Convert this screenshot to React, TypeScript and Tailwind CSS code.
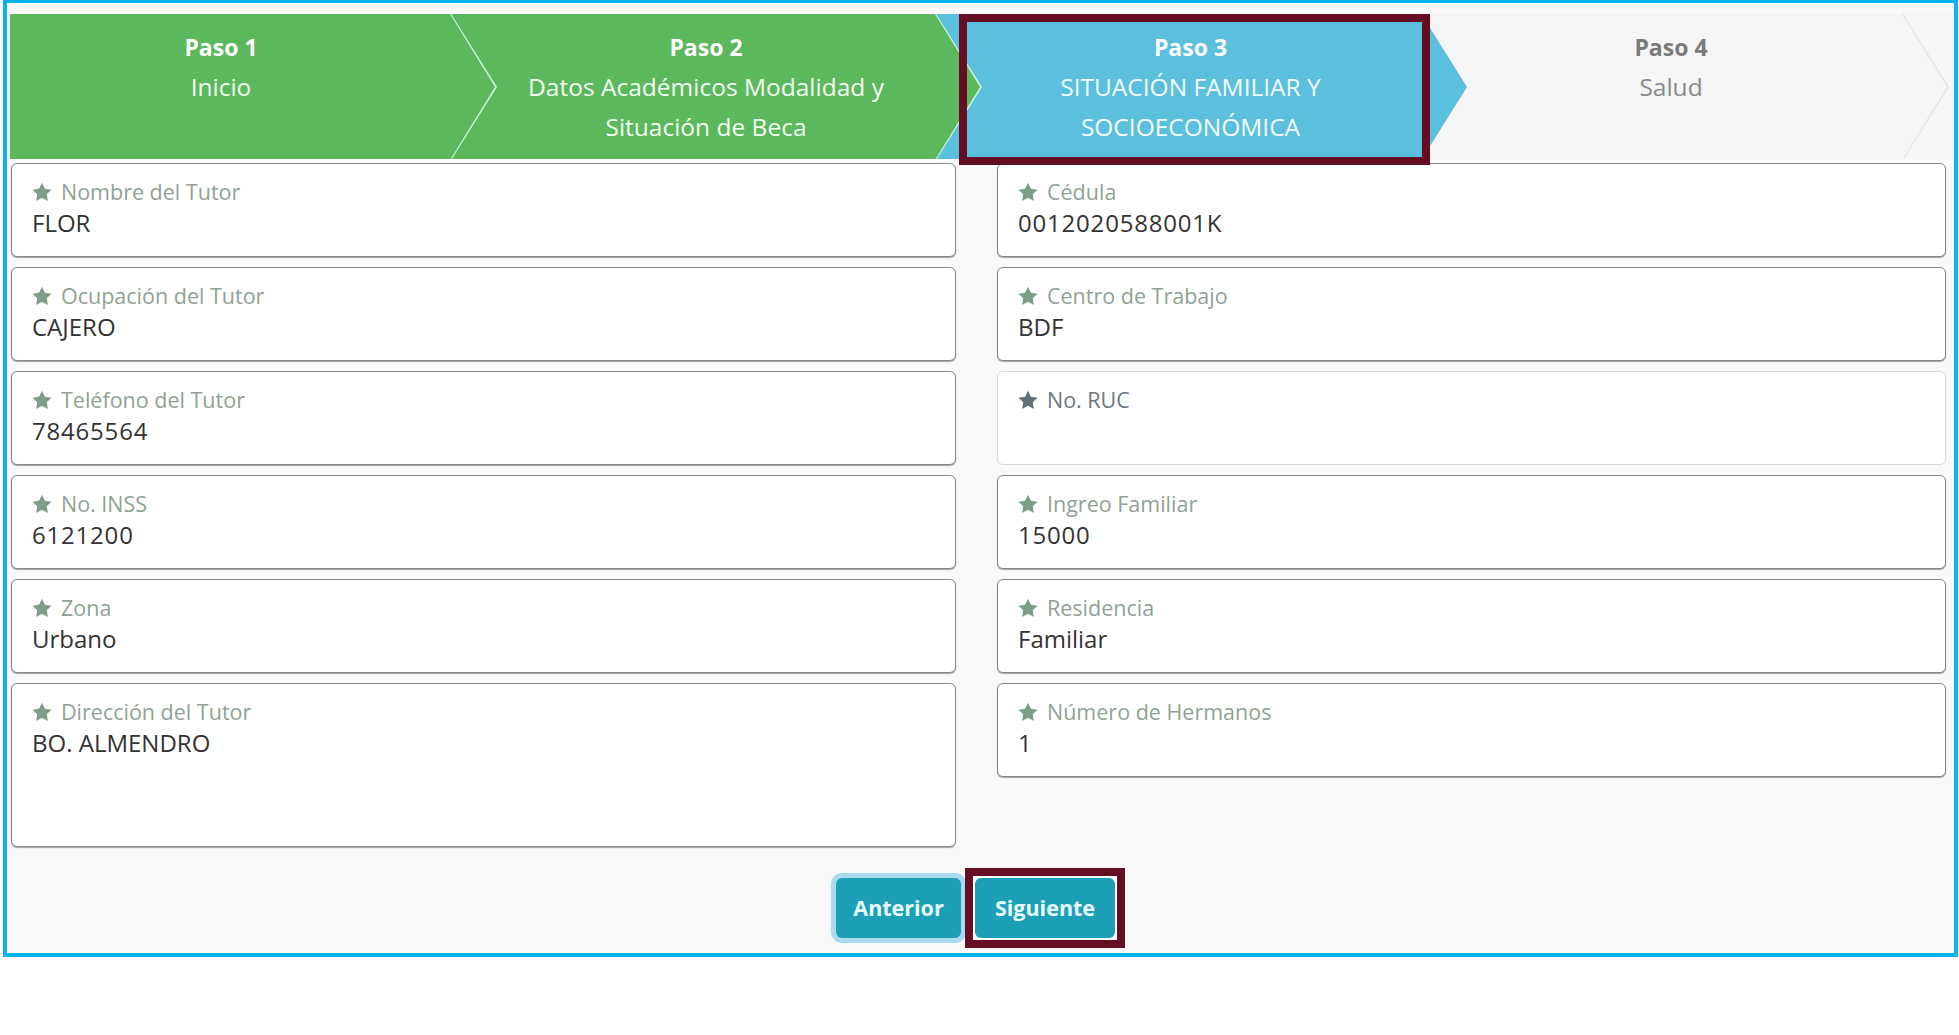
const steps = [
  {
    title: "Paso 1",
    lines: ["Inicio"],
    box: "relative z-[4] h-full w-[440px] shrink-0 bg-[#5cb85c] pr-[18px] text-white",
    line: "border-l-[#c9f3dd]",
    fill: "border-l-[#5cb85c]",
    sub: "text-[#f2fff2]",
  },
  {
    title: "Paso 2",
    lines: ["Datos Académicos Modalidad y", "Situación de Beca"],
    box: "relative z-[3] h-full w-[485px] shrink-0 bg-[#5cb85c] pl-[27px] text-white",
    line: "border-l-[#c9f3dd]",
    fill: "border-l-[#5cb85c]",
    sub: "text-[#f2fff2]",
  },
  {
    title: "Paso 3",
    lines: ["SITUACIÓN FAMILIAR Y", "SOCIOECONÓMICA"],
    box: "relative z-[2] h-full w-[485px] shrink-0 bg-[#5bbfde] pl-[26px] text-white",
    line: "border-l-[#5bbfde]",
    fill: "border-l-[#5bbfde]",
    sub: "text-[#f4fcff]",
  },
  {
    title: "Paso 4",
    lines: ["Salud"],
    box: "relative z-[1] h-full w-[482px] shrink-0 bg-[#f5f5f5] pl-[20px] text-[#7a7a7a]",
    line: "border-l-[#e4e4e4]",
    fill: "border-l-[#f5f5f5]",
    sub: "text-[#8a8a8a]",
  },
];

const left = [
  { label: "Nombre del Tutor", value: "FLOR" },
  { label: "Ocupación del Tutor", value: "CAJERO" },
  { label: "Teléfono del Tutor", value: "78465564", num: true },
  { label: "No. INSS", value: "6121200", num: true },
  { label: "Zona", value: "Urbano" },
  { label: "Dirección del Tutor", value: "BO. ALMENDRO", tall: true },
];

const right = [
  { label: "Cédula", value: "0012020588001K", num: true },
  { label: "Centro de Trabajo", value: "BDF" },
  { label: "No. RUC", value: "", empty: true },
  { label: "Ingreo Familiar", value: "15000", num: true },
  { label: "Residencia", value: "Familiar" },
  { label: "Número de Hermanos", value: "1" },
];

type FieldProps = {
  label: string;
  value: string;
  tall?: boolean;
  empty?: boolean;
  num?: boolean;
};

const Star = ({ color }: { color: string }) => (
  <svg width="22" height="20" viewBox="0 0 24 22" className="shrink-0">
    <path
      d="M12 0.8l3.2 6.7 7.3 1-5.3 5.1 1.3 7.3L12 17.4l-6.5 3.5 1.3-7.3L1.5 8.5l7.3-1z"
      fill={color}
    />
  </svg>
);

const Field = ({ label, value, tall, empty, num }: FieldProps) => (
  <div
    className={
      empty
        ? "h-[94px] rounded-[6px] border border-[#dadada] bg-white pl-[19px] pt-[13px]"
        : tall
          ? "h-[164px] rounded-[6px] border border-[#858585] bg-white pl-[19px] pt-[13px] shadow-[0_1px_1px_rgba(0,0,0,0.35)]"
          : "h-[94px] rounded-[6px] border border-[#858585] bg-white pl-[19px] pt-[13px] shadow-[0_1px_1px_rgba(0,0,0,0.35)]"
    }
  >
    <div className="flex items-center gap-[8px] leading-[30px]">
      <Star color={empty ? "#5f6f7b" : "#7d9c84"} />
      <span className={empty ? "text-[21.5px] text-[#6d777f]" : "text-[21.5px] text-[#8fa293]"}>
        {label}
      </span>
    </div>
    <div
      className={
        num
          ? "pl-[1px] text-[24px] leading-[32px] tracking-[0.8px] text-[#333]"
          : "pl-[1px] text-[24px] leading-[32px] text-[#333]"
      }
    >
      {value}
    </div>
  </div>
);

export default function App() {
  return (
    <div className="h-[1035px] w-[1959px] bg-white font-['Open_Sans',sans-serif]">
      <div className="ml-[3px] h-[957px] w-[1955px] border-x-4 border-t-[3px] border-b-4 border-[#0bb3ee] bg-[#f9f9f9]">
        {/* Wizard steps */}
        <div className="relative ml-[3px] mt-[11px] w-[1943px]">
          <div className="flex h-[145px] overflow-hidden bg-[#f6f6f6]">
            {steps.map((s) => (
              <div key={s.title} className={s.box}>
                <div className="flex flex-col items-center pt-[13px] text-[24.5px] leading-[40px]">
                  <span className="text-[23px] font-bold">{s.title}</span>
                  {s.lines.map((l) => (
                    <span key={l} className={s.sub}>
                      {l}
                    </span>
                  ))}
                </div>
                <span
                  className={`absolute left-full top-[-2px] h-0 w-0 border-y-[75px] border-l-[47px] border-y-transparent ${s.line}`}
                />
                <span
                  className={`absolute left-full top-0 h-0 w-0 border-y-[73px] border-l-[45px] border-y-transparent ${s.fill}`}
                />
              </div>
            ))}
          </div>
          <div className="pointer-events-none absolute left-[949px] top-0 z-10 h-[151px] w-[471px] border-8 border-[#650d22]" />
        </div>

        {/* Form fields */}
        <div className="ml-[4px] mt-[4px] flex items-start gap-[41px]">
          <div className="flex w-[945px] flex-col gap-[10px]">
            {left.map((f) => (
              <Field key={f.label} {...f} />
            ))}
          </div>
          <div className="flex w-[949px] flex-col gap-[10px]">
            {right.map((f) => (
              <Field key={f.label} {...f} />
            ))}
          </div>
        </div>

        {/* Navigation */}
        <div className="mt-[21px] flex items-center justify-center gap-[4px]">
          <button className="h-[60px] w-[125px] rounded-[6px] bg-[#1da0b7] text-[21.5px] font-bold text-[#e8fdff] ring-[5px] ring-[#a9dbef]">
            Anterior
          </button>
          <div className="border-8 border-[#650d22] bg-white p-[2px]">
            <button className="h-[60px] w-[140px] rounded-[6px] bg-[#1da0b7] text-[21.5px] font-bold text-[#e8fdff]">
              Siguiente
            </button>
          </div>
        </div>
      </div>
    </div>
  );
}
